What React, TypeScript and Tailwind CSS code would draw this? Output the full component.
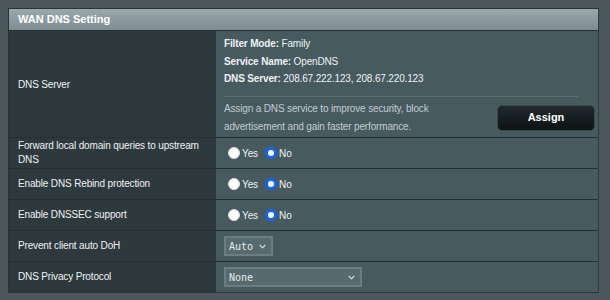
import React from "react";

const Radio = ({ checked }: { checked?: boolean }) =>
  checked ? (
    <span className="inline-block w-[12px] h-[12px] rounded-full border-[3px] border-[#1565e8] bg-white box-border" />
  ) : (
    <span className="inline-block w-[12px] h-[12px] rounded-full bg-white box-border border border-[#d8dcde]" />
  );

const YesNo = () => (
  <div className="flex items-center pl-[12px] text-[10px] tracking-[-0.1px] text-[#eef2f3]">
    <Radio />
    <span className="ml-[2px]">Yes</span>
    <span className="ml-[7px] flex items-center">
      <Radio checked />
      <span className="ml-[2px]">No</span>
    </span>
  </div>
);

const Chevron = () => (
  <svg width="7" height="5" viewBox="0 0 7 5" className="shrink-0">
    <polyline points="0.8,1 3.5,3.8 6.2,1" fill="none" stroke="#dfe5e7" strokeWidth="1.1" />
  </svg>
);

const Row = ({ label, children, h = "h-[31px]" }: { label: React.ReactNode; children: React.ReactNode; h?: string }) => (
  <div className={`grid grid-cols-[207px_1fr] border-t border-[#263034] ${h}`}>
    <div className="bg-[#2e393d] flex items-center pl-[9px] text-[10px] tracking-[-0.15px] leading-[14px] text-[#eef2f3]">{label}</div>
    <div className="bg-[#475a60] flex items-center">{children}</div>
  </div>
);

export default function App() {
  return (
    <div className="w-[610px] h-[300px] bg-[#4c575c] pt-[8px] pl-[8px] font-['Liberation_Sans',Arial,sans-serif]">
      <div className="w-[591px] border border-[#2a3337] border-r-[#2f3b3f]">
        <div className="h-[21px] bg-gradient-to-b from-[#9aa8ad] to-[#7e8d92] flex items-center pl-[9px] text-[11px] font-bold text-white">
          WAN DNS Setting
        </div>
        <div className="grid grid-cols-[207px_1fr] h-[107px] border-t border-[#263034]">
          <div className="bg-[#2e393d] flex items-center pl-[9px] text-[10px] tracking-[-0.15px] text-[#eef2f3]">DNS Server</div>
          <div className="bg-[#475a60] pl-[8px] pr-[3px] pt-[4px] text-[10px] tracking-[-0.15px] text-[#eef2f3]">
            <div className="leading-[17.5px]">
              <span className="font-bold">Filter Mode:</span> Family
            </div>
            <div className="leading-[17.5px]">
              <span className="font-bold">Service Name:</span> OpenDNS
            </div>
            <div className="leading-[17.5px]">
              <span className="font-bold">DNS Server:</span> 208.67.222.123, 208.67.220.123
            </div>
            <div className="mt-[8px] w-[354px] border-t border-[#5d6e74]" />
            <div className="flex items-center justify-between mt-[3px]">
              <div className="text-[#c3cccf] leading-[18px]">
                Assign a DNS service to improve security, block
                <br />
                advertisement and gain faster performance.
              </div>
              <button className="w-[98px] h-[26px] rounded-[5px] bg-gradient-to-b from-[#1f292c] to-[#0e1315] border border-[#3a474b] text-white font-bold text-[11px] tracking-normal">
                Assign
              </button>
            </div>
          </div>
        </div>
        <Row label={<span>Forward local domain queries to upstream<br />DNS</span>}>
          <YesNo />
        </Row>
        <Row label="Enable DNS Rebind protection">
          <YesNo />
        </Row>
        <Row label="Enable DNSSEC support">
          <YesNo />
        </Row>
        <Row label="Prevent client auto DoH">
          <div className="ml-[8px] w-[49px] h-[20px] bg-[#576a70] border-2 border-[#6c7e83] flex items-center justify-between pl-[3px] pr-[5px] text-[10px] text-[#e6ecee] font-['DejaVu_Sans_Mono',monospace]">
            <span>Auto</span>
            <Chevron />
          </div>
        </Row>
        <Row label="DNS Privacy Protocol">
          <div className="ml-[8px] w-[138px] h-[20px] bg-[#576a70] border-2 border-[#6c7e83] flex items-center justify-between pl-[3px] pr-[5px] text-[10px] text-[#e6ecee] font-['DejaVu_Sans_Mono',monospace]">
            <span>None</span>
            <Chevron />
          </div>
        </Row>
      </div>
    </div>
  );
}
